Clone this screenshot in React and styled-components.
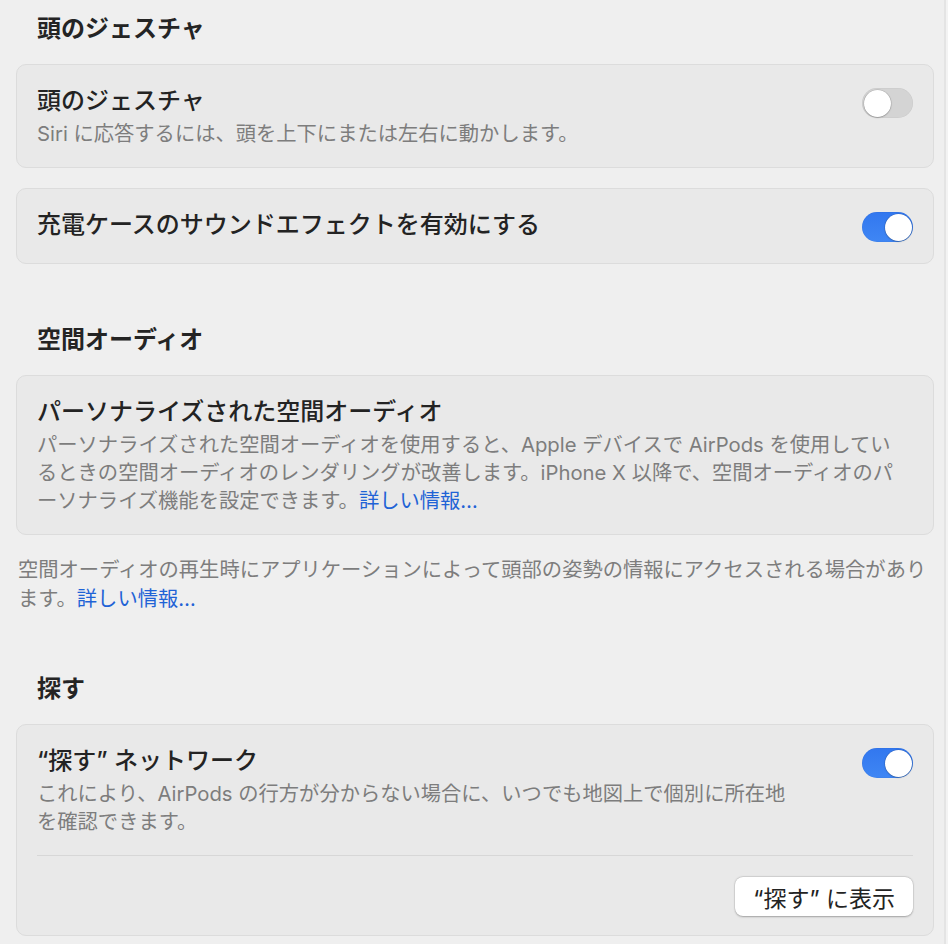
import styled, { createGlobalStyle } from 'styled-components'

const GlobalStyle = createGlobalStyle`
  body {
    margin: 0;
    background: #f3f3f3;
    font-family: Inter, "Noto Sans CJK JP", sans-serif;
    color: #242424;
  }
`

export default function App() {
  return (
    <>
      <GlobalStyle />
      <Page>
        <Section>
          <SectionTitle>頭のジェスチャ</SectionTitle>
          <Card>
            <Row>
              <RowText>
                <RowTitle>頭のジェスチャ</RowTitle>
                <RowDesc>Siri に応答するには、頭を上下にまたは左右に動かします。</RowDesc>
              </RowText>
              <Switch />
            </Row>
          </Card>
          <Card>
            <Row>
              <RowText>
                <RowTitle>充電ケースのサウンドエフェクトを有効にする</RowTitle>
              </RowText>
              <Switch $on />
            </Row>
          </Card>
        </Section>

        <Section>
          <SectionTitle>空間オーディオ</SectionTitle>
          <Card>
            <Row>
              <RowText>
                <RowTitle>パーソナライズされた空間オーディオ</RowTitle>
                <RowDesc>
                  パーソナライズされた空間オーディオを使用すると、Apple デバイスで AirPods を使用しているときの空間オーディオのレンダリングが改善します。iPhone X 以降で、空間オーディオのパーソナライズ機能を設定できます。
                  <Link>詳しい情報…</Link>
                </RowDesc>
              </RowText>
            </Row>
          </Card>
          <Footnote>
            空間オーディオの再生時にアプリケーションによって頭部の姿勢の情報にアクセスされる場合があります。
            <Link>詳しい情報…</Link>
          </Footnote>
        </Section>

        <Section>
          <SectionTitle>探す</SectionTitle>
          <Card>
            <Row>
              <RowText>
                <RowTitle>“探す” ネットワーク</RowTitle>
                <RowDesc>これにより、AirPods の行方が分からない場合に、いつでも地図上で個別に所在地を確認できます。</RowDesc>
              </RowText>
              <Switch $on />
            </Row>
            <Divider />
            <ButtonRow>
              <Button>“探す” に表示</Button>
            </ButtonRow>
          </Card>
        </Section>
      </Page>
    </>
  )
}

const Page = styled.main`
  box-sizing: border-box;
  width: 946px;
  min-height: 944px;
  padding: 13px 10px 8px 16px;
  background: #efefef;
  border-right: 2px solid #e4e4e4;
  display: flex;
  flex-direction: column;
`

const Section = styled.section`
  display: flex;
  flex-direction: column;
  gap: 20px;
  & + & {
    margin-top: 60px;
  }
`

const SectionTitle = styled.h2`
  margin: 0 0 -1px;
  padding: 0 21px;
  font-size: 24px;
  line-height: 32px;
  font-weight: 700;
  color: #242424;
`

const Card = styled.div`
  background: #e9e9e9;
  border: 1px solid #dcdcdc;
  border-radius: 10px;
`

const Row = styled.div`
  display: flex;
  align-items: flex-start;
  gap: 64px;
  padding: 21px 20px;
`

const RowText = styled.div`
  flex: 1;
  min-width: 0;
`

const RowTitle = styled.div`
  font-size: 24px;
  line-height: 30px;
  font-weight: 500;
  color: #232323;
`

const RowDesc = styled.p`
  max-width: 864px;
  margin: 4px 0 -2px;
  font-size: 20.3px;
  line-height: 28px;
  color: #7d7d7d;
`

const Link = styled.a`
  color: #1f63d6;
  cursor: pointer;
`

const Footnote = styled.p`
  margin: 0;
  padding-left: 2px;
  font-size: 20.3px;
  line-height: 29px;
  color: #7d7d7d;
`

const Switch = styled.span`
  flex: none;
  position: relative;
  width: 51px;
  height: 30px;
  margin-top: 2px;
  border-radius: 15px;
  background: ${({ $on }) => ($on ? 'linear-gradient(#3277ef, #3f86f4)' : '#d4d4d4')};
  box-shadow: inset 0 0 0 0.5px rgba(0, 0, 0, 0.06);
  &::after {
    content: '';
    position: absolute;
    top: 1.5px;
    left: ${({ $on }) => ($on ? '22.5px' : '1.5px')};
    width: 27px;
    height: 27px;
    border-radius: 50%;
    background: #fff;
    box-shadow: 0 0.5px 1.5px rgba(0, 0, 0, 0.35), 0 0 0 0.5px rgba(0, 0, 0, 0.1);
  }
`

const Divider = styled.hr`
  margin: 0 20px;
  border: 0;
  border-top: 1px solid #d7d7d7;
`

const ButtonRow = styled.div`
  display: flex;
  justify-content: flex-end;
  padding: 21px 20px 19px;
`

const Button = styled.button`
  height: 39px;
  padding: 0 18px;
  border: 0;
  border-radius: 8px;
  background: #fff;
  box-shadow: 0 0.5px 2px rgba(0, 0, 0, 0.28), 0 0 0 0.5px rgba(0, 0, 0, 0.08);
  font-family: inherit;
  font-size: 23px;
  color: #232323;
`
